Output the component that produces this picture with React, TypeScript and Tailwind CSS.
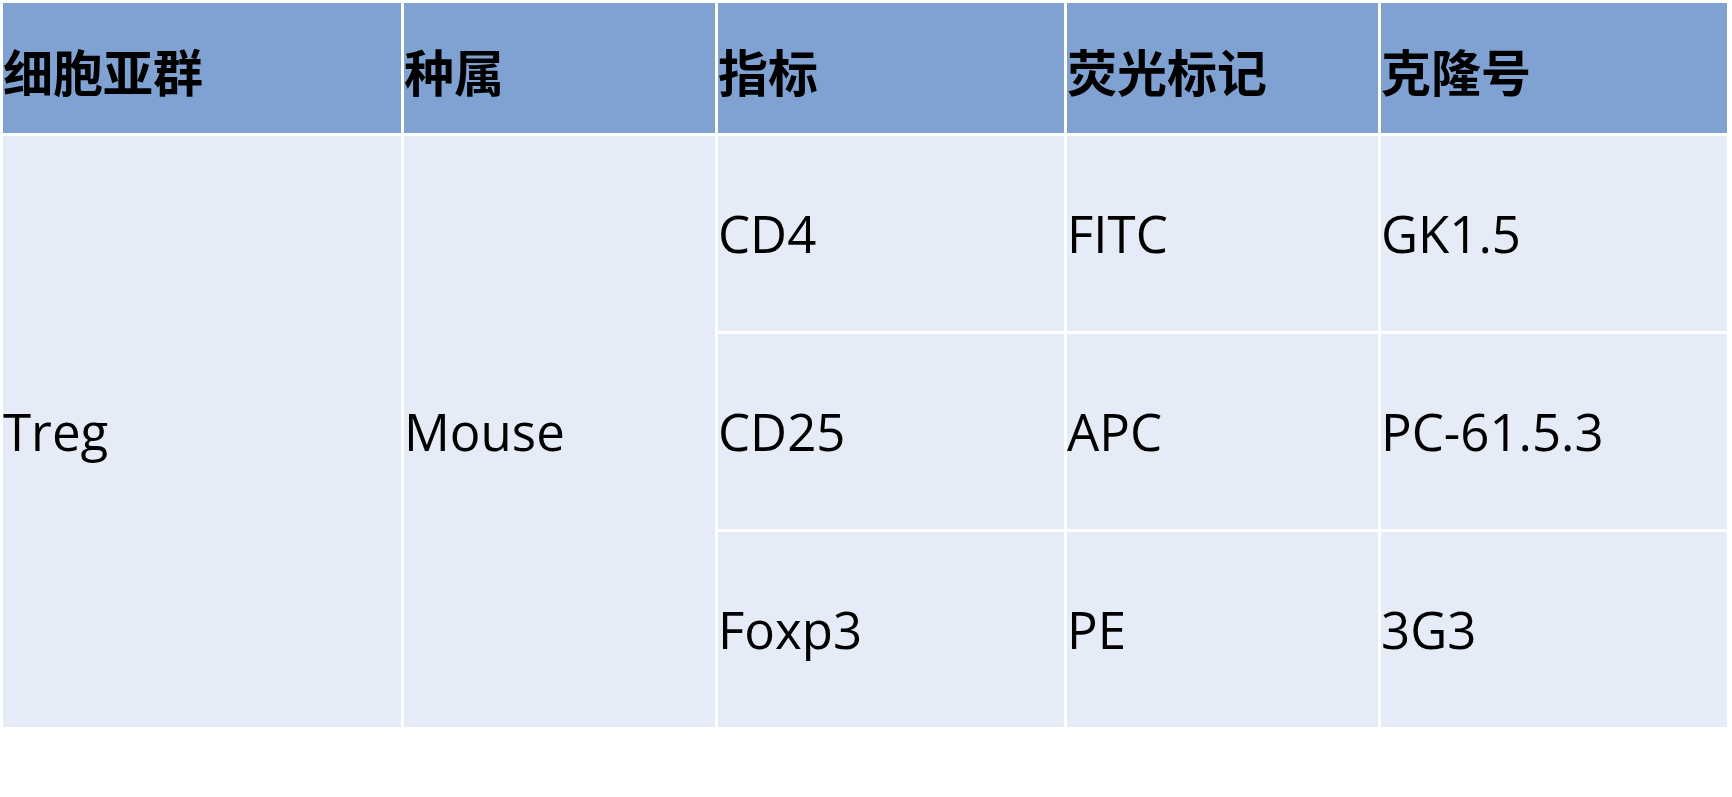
import React from "react";

const headers = ["细胞亚群", "种属", "指标", "荧光标记", "克隆号"];
const rows = [
  ["CD4", "FITC", "GK1.5"],
  ["CD25", "APC", "PC-61.5.3"],
  ["Foxp3", "PE", "3G3"],
];

const cell =
  "bg-[#e5ebf7] flex items-center text-[51px] leading-none font-['Open_Sans','Noto_Sans','Noto_Sans_CJK_SC',sans-serif]";

export default function App() {
  return (
    <div className="w-[1732px] h-[797px] bg-white pt-[3px] pl-[3px]">
      <div className="grid grid-cols-[398px_311px_346px_311px_346px] grid-rows-[130px_195px_195px_195px] gap-[3px] w-fit text-black">
        {headers.map((h) => (
          <div
            key={h}
            className="bg-[#7fa2d2] flex items-center text-[50px] font-bold leading-none pt-[3px] font-['Noto_Sans_CJK_SC','Noto_Sans',sans-serif]"
          >
            {h}
          </div>
        ))}
        <div className={`row-span-3 ${cell}`}>Treg</div>
        <div className={`row-span-3 ${cell}`}>Mouse</div>
        {rows.map((r) =>
          r.map((c, i) => (
            <div key={r[0] + i} className={i === 0 ? `col-start-3 ${cell}` : cell}>
              {c}
            </div>
          ))
        )}
      </div>
    </div>
  );
}
